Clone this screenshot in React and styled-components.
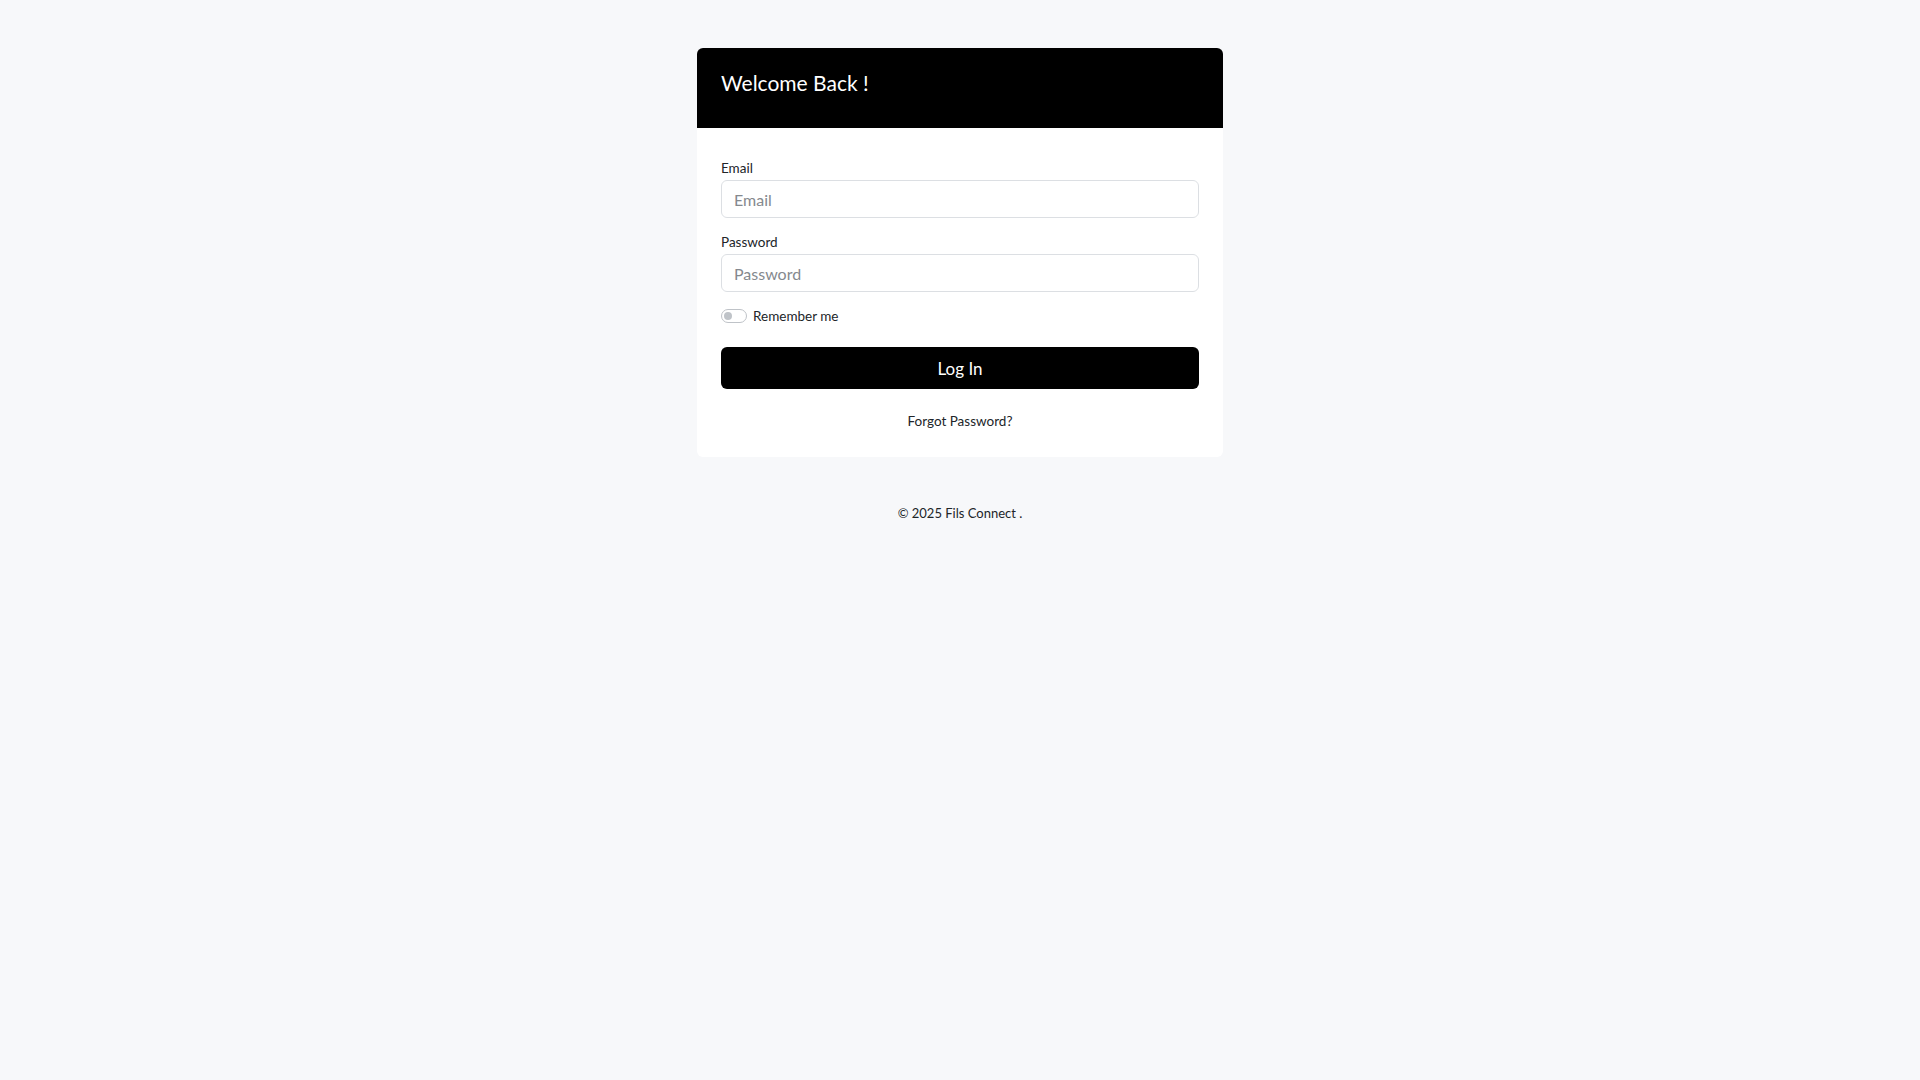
import React from 'react';
import styled, { createGlobalStyle } from 'styled-components';

const GlobalStyle = createGlobalStyle`
  html, body {
    margin: 0;
    padding: 0;
    background: #f7f8fa;
    font-family: 'Lato', 'Liberation Sans', sans-serif;
    color: #212529;
  }
  * {
    box-sizing: border-box;
  }
`;

const Page = styled.main`
  min-height: 100vh;
  padding-top: 48px;
  display: flex;
  flex-direction: column;
  align-items: center;
`;

const Card = styled.section`
  width: 526px;
  background: #fff;
  border-radius: 6px;
  overflow: hidden;
`;

const CardHeader = styled.header`
  background: #000;
  height: 80px;
  padding: 22px 24px 0;
`;

const Title = styled.h5`
  margin: 0;
  color: #fff;
  font-size: 21px;
  font-weight: 400;
  line-height: 26px;
`;

const CardBody = styled.form`
  padding: 32px 24px 28px;
  display: flex;
  flex-direction: column;
`;

const Field = styled.div`
  display: flex;
  flex-direction: column;
  margin-bottom: 16px;
`;

const Label = styled.label`
  font-size: 13.5px;
  line-height: 16px;
  color: #212529;
  margin-bottom: 4px;
`;

const Input = styled.input`
  height: 38px;
  border: 1px solid #dcdfe3;
  border-radius: 6px;
  padding: 0 12px;
  font-family: inherit;
  font-size: 16px;
  color: #212529;
  outline: none;
  &::placeholder {
    color: #85898e;
  }
`;

const SwitchRow = styled.label`
  display: flex;
  align-items: center;
  gap: 6px;
  height: 16px;
  font-size: 13.5px;
  color: #212529;
  margin-bottom: 23px;
  cursor: pointer;
`;

const Switch = styled.span`
  position: relative;
  width: 26px;
  height: 14px;
  border: 1px solid #bfc3c8;
  border-radius: 7px;
  background: #fff;
  &::after {
    content: '';
    position: absolute;
    top: 2px;
    left: 2px;
    width: 8px;
    height: 8px;
    border-radius: 50%;
    background: #bfc3c8;
  }
`;

const Button = styled.button`
  height: 42px;
  border: none;
  border-radius: 6px;
  background: #000;
  color: #fff;
  font-family: inherit;
  font-size: 17px;
  cursor: pointer;
  margin-bottom: 24px;
`;

const LinkText = styled.a`
  align-self: center;
  font-size: 13.5px;
  line-height: 16px;
  color: #212529;
  text-decoration: none;
`;

const Footer = styled.p`
  margin: 48px 0 0;
  font-size: 13px;
  line-height: 16px;
  color: #212529;
`;

const App = () => (
  <>
    <GlobalStyle />
    <Page>
      <Card>
        <CardHeader>
          <Title>Welcome Back !</Title>
        </CardHeader>
        <CardBody onSubmit={(e) => e.preventDefault()}>
          <Field>
            <Label htmlFor="email">Email</Label>
            <Input id="email" type="email" placeholder="Email" />
          </Field>
          <Field>
            <Label htmlFor="password">Password</Label>
            <Input id="password" type="password" placeholder="Password" />
          </Field>
          <SwitchRow>
            <Switch />
            Remember me
          </SwitchRow>
          <Button type="submit">Log In</Button>
          <LinkText href="#">Forgot Password?</LinkText>
        </CardBody>
      </Card>
      <Footer>© 2025 Fils Connect .</Footer>
    </Page>
  </>
);

export default App;
